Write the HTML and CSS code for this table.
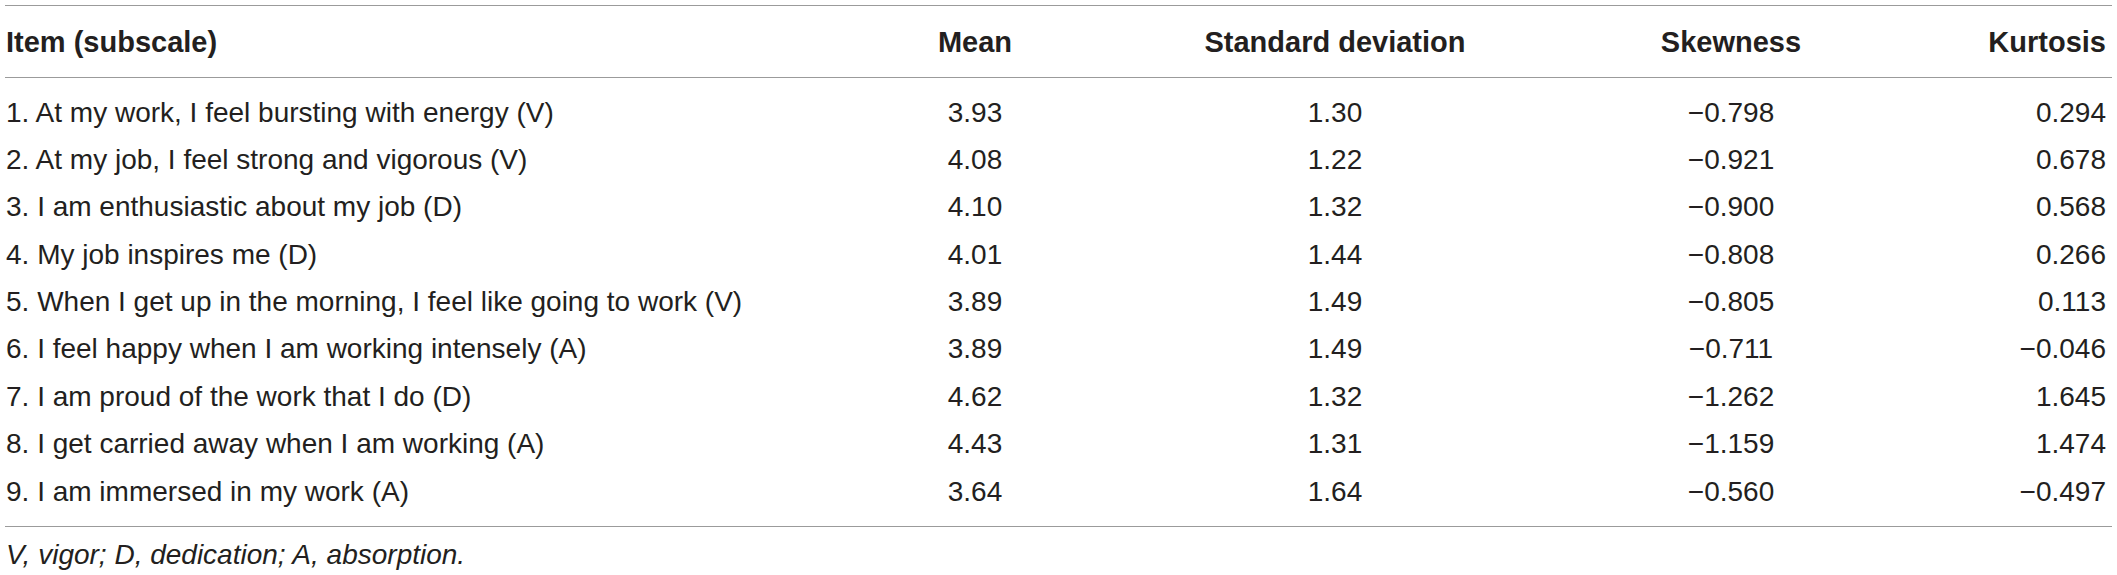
FILE: index.html
```html
<!DOCTYPE html>
<html lang="en">
<head>
<meta charset="utf-8">
<title>Table</title>
<link rel="stylesheet" href="styles.css">
</head>
<body>
<div class="wrap">
  <table class="stats">
    <colgroup>
      <col class="c-item">
      <col class="c-mean">
      <col class="c-sd">
      <col class="c-skew">
      <col class="c-kurt">
    </colgroup>
    <thead>
      <tr>
        <th class="left">Item (subscale)</th>
        <th class="center">Mean</th>
        <th class="center">Standard deviation</th>
        <th class="center">Skewness</th>
        <th class="right">Kurtosis</th>
      </tr>
    </thead>
    <tbody>
      <tr class="first"><td class="left">1. At my work, I feel bursting with energy (V)</td><td class="center">3.93</td><td class="center">1.30</td><td class="center">−0.798</td><td class="right">0.294</td></tr>
      <tr><td class="left">2. At my job, I feel strong and vigorous (V)</td><td class="center">4.08</td><td class="center">1.22</td><td class="center">−0.921</td><td class="right">0.678</td></tr>
      <tr><td class="left">3. I am enthusiastic about my job (D)</td><td class="center">4.10</td><td class="center">1.32</td><td class="center">−0.900</td><td class="right">0.568</td></tr>
      <tr><td class="left">4. My job inspires me (D)</td><td class="center">4.01</td><td class="center">1.44</td><td class="center">−0.808</td><td class="right">0.266</td></tr>
      <tr><td class="left">5. When I get up in the morning, I feel like going to work (V)</td><td class="center">3.89</td><td class="center">1.49</td><td class="center">−0.805</td><td class="right">0.113</td></tr>
      <tr><td class="left">6. I feel happy when I am working intensely (A)</td><td class="center">3.89</td><td class="center">1.49</td><td class="center">−0.711</td><td class="right">−0.046</td></tr>
      <tr><td class="left">7. I am proud of the work that I do (D)</td><td class="center">4.62</td><td class="center">1.32</td><td class="center">−1.262</td><td class="right">1.645</td></tr>
      <tr><td class="left">8. I get carried away when I am working (A)</td><td class="center">4.43</td><td class="center">1.31</td><td class="center">−1.159</td><td class="right">1.474</td></tr>
      <tr class="last"><td class="left">9. I am immersed in my work (A)</td><td class="center">3.64</td><td class="center">1.64</td><td class="center">−0.560</td><td class="right">−0.497</td></tr>
    </tbody>
  </table>
  <p class="note">V, vigor; D, dedication; A, absorption.</p>
</div>
</body>
</html>
```

FILE: styles.css
```css
html, body {
  margin: 0;
  padding: 0;
  background: #ffffff;
}

body {
  font-family: "Liberation Sans", Arial, sans-serif;
  color: #231f20;
}

.wrap {
  padding: 5px 5px 0 5px;
}

.stats {
  width: 2107px;
  table-layout: fixed;
  border-collapse: collapse;
  border-top: 1px solid #9b9b9b;
  border-bottom: 1px solid #9b9b9b;
}

.c-item { width: 875px; }
.c-mean { width: 190px; }
.c-sd { width: 530px; }
.c-skew { width: 262px; }
.c-kurt { width: 250px; }

.stats thead th {
  font-size: 29px;
  font-weight: 700;
  line-height: 40px;
  padding: 16px 0 15px 0;
  border-bottom: 1px solid #9b9b9b;
  white-space: nowrap;
}

.stats tbody td {
  font-size: 28px;
  font-weight: 400;
  line-height: 47.375px;
  padding: 0;
  white-space: nowrap;
}

.stats tbody tr.first td {
  padding-top: 10.5px;
}

.stats tbody tr.last td {
  padding-bottom: 11px;
}

.left {
  text-align: left;
  padding-left: 1px !important;
}

.center {
  text-align: center;
}

.right {
  text-align: right;
  padding-right: 6px !important;
}

.note {
  margin: 12px 0 0 0;
  padding-left: 1px;
  font-size: 28px;
  font-style: italic;
  line-height: 32px;
}
```
